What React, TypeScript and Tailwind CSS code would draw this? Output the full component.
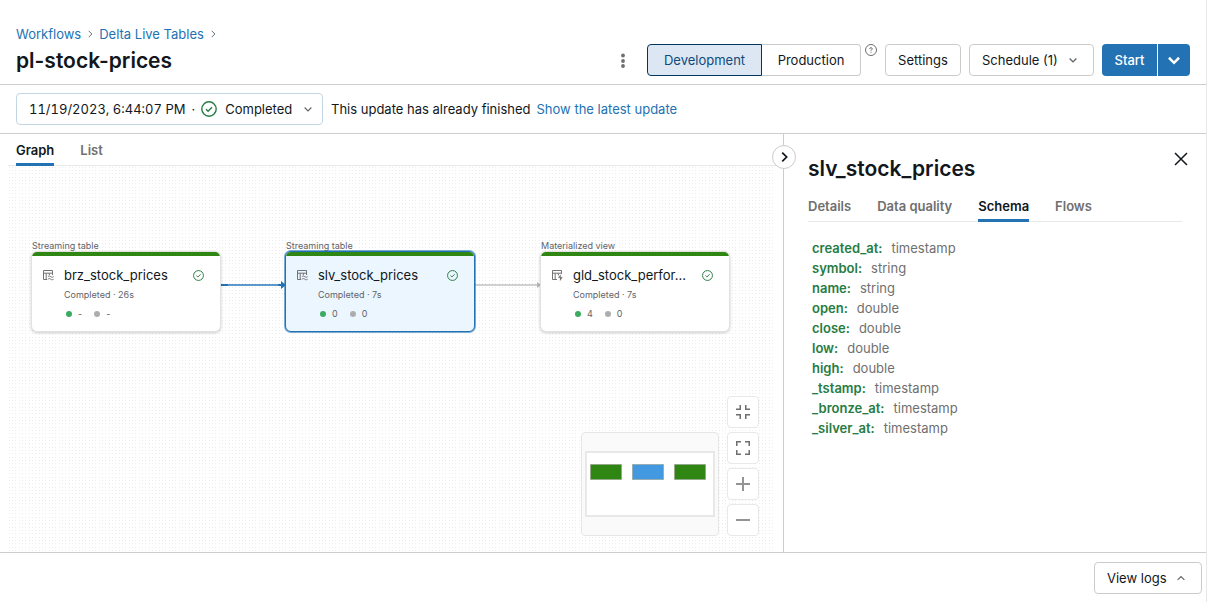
import React, { useState } from "react";
import clsx from "clsx";

const UPDATES = ["11/19/2023, 6:44:07 PM"];

const SCHEMA = [
  ["created_at", "timestamp"],
  ["symbol", "string"],
  ["name", "string"],
  ["open", "double"],
  ["close", "double"],
  ["low", "double"],
  ["high", "double"],
  ["_tstamp", "timestamp"],
  ["_bronze_at", "timestamp"],
  ["_silver_at", "timestamp"],
];

type TableNode = {
  kind: "Streaming table" | "Materialized view";
  name: string;
  duration: string;
  written: string;
  dropped: string;
  selected?: boolean;
  place: string;
};

const NODES: TableNode[] = [
  { kind: "Streaming table", name: "brz_stock_prices", duration: "26s", written: "-", dropped: "-", place: "left-[23px]" },
  { kind: "Streaming table", name: "slv_stock_prices", duration: "7s", written: "0", dropped: "0", selected: true, place: "left-[277px]" },
  { kind: "Materialized view", name: "gld_stock_perfor...", duration: "7s", written: "4", dropped: "0", place: "left-[532px]" },
];

function Chevron({ dir = "down", className }: { dir?: "down" | "up" | "right"; className?: string }) {
  const d = { down: "M3.500 6l4.500 4.500L12.500 6", up: "M3.500 10.500L8 6l4.500 4.500", right: "M6 3l5 5-5 5" }[dir];
  return (
    <svg viewBox="0 0 16 16" className={clsx("shrink-0", className)} fill="none" stroke="currentColor" aria-hidden="true">
      <path d={d} />
    </svg>
  );
}

function CheckCircle({ className }: { className: string }) {
  return (
    <svg viewBox="0 0 16 16" className={clsx("shrink-0 text-[#277c43]", className)} fill="none" stroke="currentColor" strokeWidth="1.4" aria-hidden="true">
      <circle cx="8" cy="8" r="7.2" />
      <path d="M5 8.2l2.1 2 3.9-4" />
    </svg>
  );
}

function TableIcon({ kind }: { kind: TableNode["kind"] }) {
  return (
    <svg viewBox="0 0 16 16" className="size-3 shrink-0 text-[#6f6f6f]" fill="none" stroke="currentColor" strokeWidth="1.3" aria-hidden="true">
      {kind === "Streaming table" ? (
        <>
          <path d="M7 14H2V2h12v6M2 5.600h12M5.600 5.600V14M9.800 5.600v2.600" />
          <path d="M8 10.200c1.300-1.200 2.500-1 3.800 0s2.400 1 3.700 0M8 13.600c1.300-1.200 2.500-1 3.800 0s2.400 1 3.700 0" />
        </>
      ) : (
        <>
          <path d="M8 14H2V2h12v4.500M2 5.600h12M5.600 5.600V14M9.800 5.600v3" />
          <path d="M12.800 7.500l-3.300 4h2.500v4l3.400-4.400h-2.600z" fill="currentColor" strokeWidth="0.300" />
        </>
      )}
    </svg>
  );
}

function GraphNode({ node }: { node: TableNode }) {
  return (
    <div className={clsx("absolute top-[74px] w-[190px]", node.place)}>
      <p className="-mb-px px-px text-[9px] leading-3 text-[#5f6368]">{node.kind}</p>
      <button
        type="button"
        className={clsx(
          "block w-full overflow-hidden rounded-md border text-left",
          node.selected ? "border-[#2272b4] bg-[#ebf6ff] ring-1 ring-[#2272b4]/60" : "border-[#e2e2e2] bg-white shadow-[0_1px_3px_rgba(0,0,0,0.2)]",
        )}
      >
        <span className="block h-1 bg-[#308613]" />
        <span className="flex gap-2.5 px-2.5 pt-[9px] pb-2">
          <span className="flex h-5 items-center">
            <TableIcon kind={node.kind} />
          </span>
          <span className="min-w-0 flex-1">
            <span className="flex items-center gap-1 pr-1.5">
              <span className="flex-1 text-[13px] leading-5 whitespace-nowrap text-[#11171c]">{node.name}</span>
              <CheckCircle className="size-[11px]" />
            </span>
            <span className="block text-[9px] leading-5 text-[#5f6368]">Completed · {node.duration}</span>
            <span className="flex h-[18px] items-center text-[9px] leading-4 text-[#5f6368]">
              <span className="mr-1.5 ml-0.5 size-1.5 rounded-full bg-[#3caa60]" />
              <span className="mr-3">{node.written}</span>
              <span className="mr-1.5 size-1.5 rounded-full bg-[#adadad]" />
              <span>{node.dropped}</span>
            </span>
          </span>
        </span>
      </button>
    </div>
  );
}

function DotGrid() {
  return (
    <svg className="absolute inset-y-0 left-0 h-full w-[calc(100%-8px)]" aria-hidden="true">
      <defs>
        <pattern id="dots" width="10" height="10" patternUnits="userSpaceOnUse">
          <path
            d="M1 1h1v1h-1zM4 1h1v1h-1zM7 1h1v1h-1zM1 4h1v1h-1zM4 4h1v1h-1zM7 4h1v1h-1zM1 7h1v1h-1zM4 7h1v1h-1zM7 7h1v1h-1z"
            fill="#ededed"
          />
        </pattern>
      </defs>
      <rect width="100%" height="100%" fill="url(#dots)" />
    </svg>
  );
}

function Edges() {
  return (
    <svg className="absolute top-[109px] left-[212px] h-5 w-[324px]" fill="none" aria-hidden="true">
      <path d="M0 10h62" stroke="#5c98cb" strokeWidth="2" />
      <path d="M0 10h8M58 10h7" stroke="#2272b4" strokeWidth="2" />
      <path d="M61 6l5 4-5 4z" fill="#2272b4" />
      <path d="M254 10h66" stroke="#d0d0d3" strokeWidth="2" />
      <path d="M317 7l4 3-4 3z" fill="#b5b5b8" />
    </svg>
  );
}

function MiniMap() {
  return (
    <svg className="h-[104px] w-[138px]" role="img" aria-label="Graph overview">
      <rect x="0.5" y="0.5" width="137" height="103" rx="3.500" fill="#fafafa" stroke="#e6e6e6" />
      <rect x="5" y="20" width="128" height="64" fill="#fff" stroke="#e8e8e8" strokeWidth="2" />
      <g stroke="#8f9a8a" strokeOpacity="0.6">
        <rect x="9.500" y="32.500" width="31" height="15" fill="#308613" />
        <rect x="51.500" y="32.500" width="31" height="15" fill="#4299e0" />
        <rect x="93.500" y="32.500" width="31" height="15" fill="#308613" />
      </g>
    </svg>
  );
}

const CONTROLS = [
  { label: "Fit to view", d: "M0 4.250h4.250V0M9.750 0v4.250H14M0 9.750h4.250V14M9.750 14V9.750H14" },
  { label: "Full screen", d: "M0.750 5V0.750H5M9 0.750h4.250V5M0.750 9v4.250H5M9 13.250h4.250V9" },
  { label: "Zoom in", d: "M0 7h14M7 0v14" },
  { label: "Zoom out", d: "M0 7h14" },
];

function Tabs({ items, active, onPick, label, gap }: { items: string[]; active: string; onPick: (t: string) => void; label: string; gap: string }) {
  return (
    <div role="tablist" aria-label={label} className={clsx("flex h-8 border-b border-[#e8e8e8]", gap)}>
      {items.map((t) => (
        <button
          key={t}
          type="button"
          role="tab"
          aria-selected={t === active}
          onClick={() => onPick(t)}
          className={clsx(
            "-mb-px h-8 border-b-3 pt-0.5 text-[13px] leading-7 font-semibold",
            t === active ? "border-[#2272b4] text-[#11171c]" : "border-transparent text-[#6f6f6f]",
          )}
        >
          {t}
        </button>
      ))}
    </div>
  );
}

export default function App() {
  const [view, setView] = useState("Graph");
  const [tab, setTab] = useState("Schema");
  const plain = "h-8 rounded border border-[#cbcbcb] bg-white text-[#11171c]";

  return (
    <div className="flex min-h-screen flex-col border-r border-[#e8e8e8] bg-white font-['Inter','Liberation_Sans',sans-serif] text-[13px] leading-5 text-[#11171c]">
      <header className="flex items-end justify-between border-b border-[#cdcdcd] px-4 pt-6 pb-2">
        <div>
          <nav aria-label="Breadcrumb" className="flex items-center text-[#2272b4]">
            <a href="#workflows">Workflows</a>
            <Chevron dir="right" className="mx-1 size-2.5 text-[#5f7281] [stroke-width:1.6]" />
            <a href="#delta-live-tables">Delta Live Tables</a>
            <Chevron dir="right" className="mx-1 size-2.5 text-[#5f7281] [stroke-width:1.6]" />
          </nav>
          <h1 className="pt-0.5 text-[21px] leading-[30px] font-semibold">pl-stock-prices</h1>
        </div>
        <div className="flex items-center">
          <button type="button" aria-label="More actions" className="mr-4 flex size-4 items-center justify-center">
            <svg viewBox="0 0 4 16" className="h-4 w-1 text-[#6f6f6f]" fill="currentColor" aria-hidden="true">
              <circle cx="2" cy="3.500" r="1.900" />
              <circle cx="2" cy="9" r="1.900" />
              <circle cx="2" cy="14" r="1.900" />
            </svg>
          </button>
          <div role="group" aria-label="Pipeline mode" className="flex">
            <button type="button" aria-pressed="true" className="h-8 w-[115px] rounded-l border border-[#04355d] bg-[#dce7f3] text-[#0e4a7b]">
              Development
            </button>
            <button type="button" aria-pressed="false" className="h-8 w-[99px] rounded-r border border-l-0 border-[#cbcbcb] bg-white">
              Production
            </button>
          </div>
          <button type="button" aria-label="About pipeline modes" className="mx-1 mr-2 size-3 self-start text-[#6f6f6f]">
            <svg viewBox="0 0 12 12" className="size-3" fill="none" stroke="currentColor" aria-hidden="true">
              <circle cx="6" cy="6" r="5.500" />
              <path d="M4.700 4.900c0-1.700 2.600-1.600 2.600 0 0 .9-1.300.8-1.300 1.800M6 7.700v1" />
            </svg>
          </button>
          <button type="button" className={clsx(plain, "w-[76px]")}>Settings</button>
          <button type="button" aria-haspopup="menu" className={clsx(plain, "ml-2 flex w-[125px] items-center justify-between pr-3.5 pl-3")}>
            Schedule (1)
            <Chevron className="size-3 text-[#5f6368] [stroke-width:1.800]" />
          </button>
          <button type="button" className="ml-2 h-8 w-[55px] rounded-l bg-[#2272b4] font-medium text-white">Start</button>
          <button type="button" aria-label="More start options" className="ml-px flex h-8 w-8 items-center justify-center rounded-r bg-[#2272b4] text-white">
            <Chevron className="size-[18px] [stroke-width:2.200]" />
          </button>
        </div>
      </header>

      <div className="flex items-center border-b border-[#cdcdcd] px-4 py-2">
        <button type="button" aria-haspopup="listbox" className="flex h-8 w-[307px] items-center rounded border border-[#c3d6e4] pr-2 pl-3 tabular-nums">
          <span>{UPDATES[0]}</span>
          <span className="mx-1.5">·</span>
          <CheckCircle className="size-4" />
          <span className="ml-2">Completed</span>
          <Chevron className="ml-auto size-3 text-[#5f6368] [stroke-width:1.500]" />
        </button>
        <p className="ml-2">This update has already finished</p>
        <a href="#latest" className="ml-1.5 text-[#2272b4]">Show the latest update</a>
      </div>

      <div className="flex flex-1">
        <main className="flex min-w-0 flex-1 flex-col pl-2">
          <div className="[&>div]:pl-2">
            <Tabs items={["Graph", "List"]} active={view} onPick={setView} label="View" gap="gap-[26px]" />
          </div>
          <div className="relative min-h-[386px] flex-1 overflow-hidden">
            <DotGrid />
            <Edges />
            {NODES.map((n) => (
              <GraphNode key={n.name} node={n} />
            ))}
            <div className="absolute right-6 bottom-4 flex items-end gap-2">
              <MiniMap />
              <div className="flex flex-col gap-1">
                {CONTROLS.map((c, i) => (
                  <button
                    key={c.label}
                    type="button"
                    aria-label={c.label}
                    className={clsx("flex size-8 items-center justify-center rounded border border-[#e8e8e8] bg-white", i < 2 ? "text-[#6f6f6f]" : "text-[#949494]")}
                  >
                    <svg viewBox="0 0 14 14" className="size-3.5" fill="none" stroke="currentColor" strokeWidth={i < 2 ? 1.5 : 2} aria-hidden="true">
                      <path d={c.d} />
                    </svg>
                  </button>
                ))}
              </div>
            </div>
          </div>
        </main>

        <aside className="relative w-[423px] shrink-0 border-l border-[#cdcdcd] px-6 pt-5">
          <button type="button" aria-label="Collapse panel" className="absolute top-[11px] -left-3 flex size-6 items-center justify-center rounded-full border border-[#cbcbcb] bg-white">
            <Chevron dir="right" className="size-3.5 [stroke-width:2]" />
          </button>
          <div className="flex items-start justify-between">
            <h2 className="text-[21px] leading-[30px] font-semibold">slv_stock_prices</h2>
            <button type="button" aria-label="Close" className="-mt-0.5 -mr-1.5">
              <svg viewBox="0 0 14 14" className="size-3.5" fill="none" stroke="currentColor" strokeWidth="1.500" aria-hidden="true">
                <path d="M1 1l12 12M13 1L1 13" />
              </svg>
            </button>
          </div>
          <div className="pt-1.5">
            <Tabs items={["Details", "Data quality", "Schema", "Flows"]} active={tab} onPick={setTab} label="Table details" gap="gap-[26px]" />
          </div>
          <dl className="px-1 pt-4">
            {SCHEMA.map(([name, type]) => (
              <div key={name} className="flex gap-[9px]">
                <dt className="font-semibold text-[#277c43]">{name}:</dt>
                <dd className="text-[#6f6f6f]">{type}</dd>
              </div>
            ))}
          </dl>
        </aside>
      </div>

      <footer className="flex justify-end border-t border-[#cdcdcd] px-1 pt-[9px] pb-2">
        <button type="button" className={clsx(plain, "flex w-[108px] items-center justify-between pr-3.5 pl-3")}>
          View logs
          <Chevron dir="up" className="size-3 text-[#5f6368] [stroke-width:1.500]" />
        </button>
      </footer>
    </div>
  );
}
